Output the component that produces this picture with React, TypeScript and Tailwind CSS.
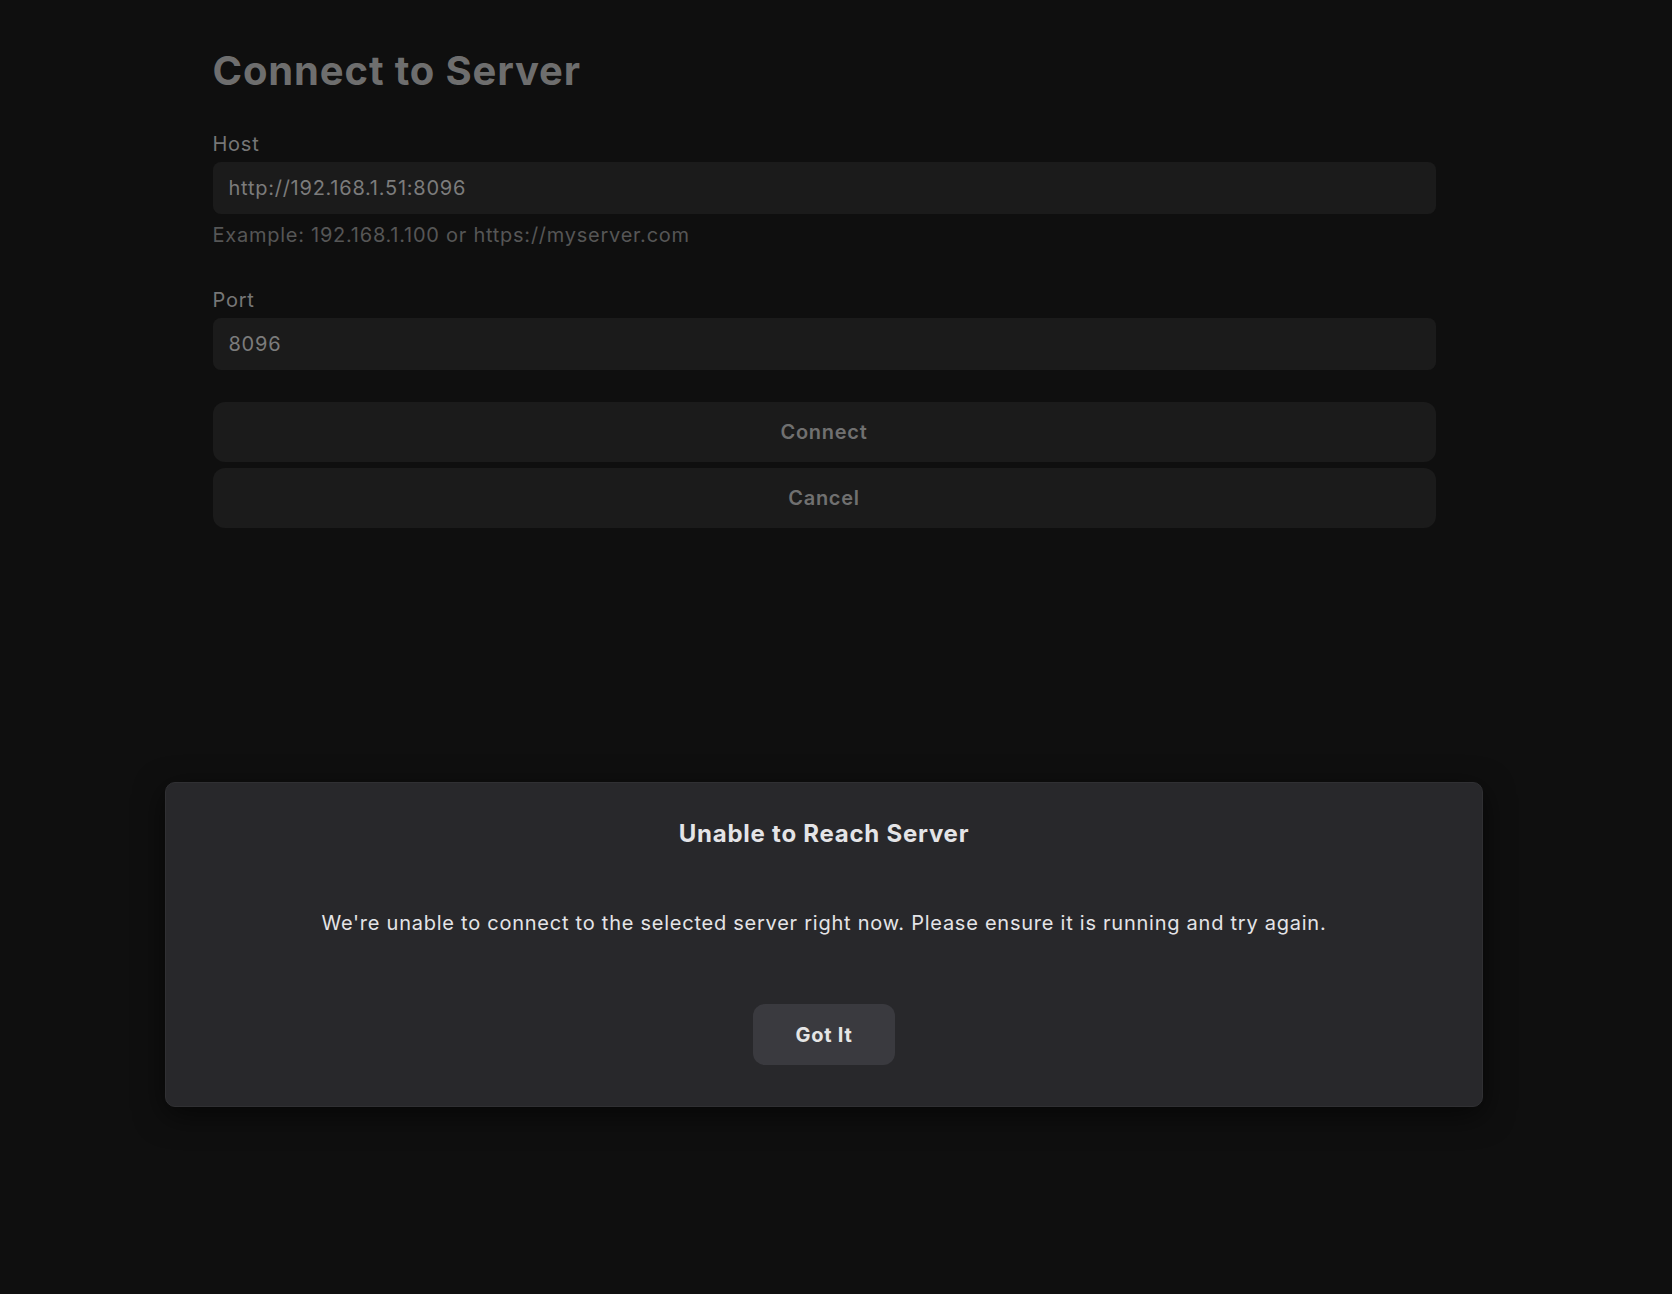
import React from "react";

export default function App() {
  return (
    <div
      className="relative min-h-[1294px] w-full bg-[#0f0f0f]"
      style={{ fontFamily: "Inter, 'Noto Sans', sans-serif" }}
    >
      <div className="w-[1648px]">
        <div className="mx-auto w-[1223px] pt-[47px]">
          <h1 className="text-[40px] leading-[48px] font-bold text-[#6e6e6e] tracking-[0.85px]">
            Connect to Server
          </h1>

          <div className="mt-[35px]">
            <label className="block text-[20px] leading-[28px] tracking-[0.75px] text-[#767676]">Host</label>
            <div className="mt-1 flex h-[52px] items-center rounded-lg bg-[#1b1b1b] px-4 text-[20px] tracking-[0.75px] text-[#7c7c7c]">
              http://192.168.1.51:8096
            </div>
            <p className="mt-[7px] text-[20px] leading-[28px] tracking-[0.75px] text-[#565656]">
              Example: 192.168.1.100 or https://myserver.com
            </p>
          </div>

          <div className="mt-[37px]">
            <label className="block text-[20px] leading-[28px] tracking-[0.75px] text-[#767676]">Port</label>
            <div className="mt-1 flex h-[52px] items-center rounded-lg bg-[#1b1b1b] px-4 text-[20px] tracking-[0.75px] text-[#7c7c7c]">
              8096
            </div>
          </div>

          <div className="mt-[32px] flex flex-col gap-[6px]">
            <button className="h-[60px] w-full rounded-xl bg-[#1b1b1b] text-[20px] font-semibold tracking-[0.75px] text-[#707070]">
              Connect
            </button>
            <button className="h-[60px] w-full rounded-xl bg-[#1b1b1b] text-[20px] font-semibold tracking-[0.75px] text-[#707070]">
              Cancel
            </button>
          </div>
        </div>
      </div>

      <div className="absolute left-[165px] top-[782px] flex h-[325px] w-[1318px] flex-col items-center rounded-[10px] border border-[#303033] bg-[#28282b] pt-[35px] shadow-[0_8px_30px_rgba(0,0,0,0.6)]">
        <h2 className="text-[24px] leading-[32px] font-bold tracking-[0.75px] text-[#e4e4e7]">
          Unable to Reach Server
        </h2>
        <p className="mt-[59px] text-[20px] leading-[28px] tracking-[0.75px] text-[#e4e4e7]">
          We're unable to connect to the selected server right now. Please ensure it is running and try again.
        </p>
        <button className="mt-[67px] h-[61px] w-[142px] rounded-xl bg-[#3a3a3f] text-[20px] font-bold tracking-[0.75px] text-[#e5e5e5]">
          Got It
        </button>
      </div>
    </div>
  );
}
